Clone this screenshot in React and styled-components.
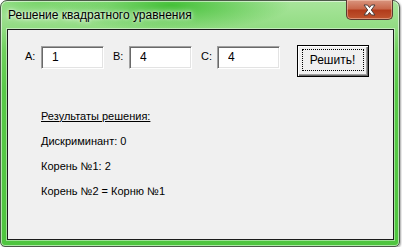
import React from 'react'
import styled, { createGlobalStyle } from 'styled-components'

const Global = createGlobalStyle`
  html, body {
    margin: 0;
    padding: 0;
    background: #ffffff;
  }
  * { box-sizing: border-box; }
`

const Window = styled.div`
  width: 400px;
  height: 247px;
  border: 1px solid #4b5a48;
  border-radius: 7px 7px 5px 5px;
  padding: 0 6px 6px 6px;
  display: flex;
  flex-direction: column;
  background:
    radial-gradient(ellipse 120px 26px at 170px 4px, rgba(52, 186, 40, 0.85), rgba(52, 186, 40, 0) 100%),
    radial-gradient(ellipse 70px 18px at 40px 0px, rgba(70, 195, 55, 0.5), rgba(70, 195, 55, 0) 100%),
    linear-gradient(to bottom, #a8e59b 0px, #93dc84 26px, #6fd05d 50px, #58c948 90px, #4fc53f 100%);
  box-shadow: inset 0 0 0 1px rgba(255, 255, 255, 0.55), 1px 1px 2px rgba(0, 0, 0, 0.35);
`

const TitleBar = styled.div`
  height: 28px;
  display: flex;
  justify-content: space-between;
  align-items: flex-start;
`

const Title = styled.span`
  margin-top: 7px;
  padding-left: 1px;
  font-family: "Liberation Sans", Arial, sans-serif;
  font-size: 12px;
  line-height: 15px;
  color: #000;
  text-shadow: 0 0 6px rgba(255, 255, 255, 0.9), 0 0 3px rgba(255, 255, 255, 0.9);
`

const CloseButton = styled.div`
  width: 47px;
  height: 20px;
  margin-top: -1px;
  border: 1px solid #5a3a30;
  border-top: none;
  border-radius: 0 0 5px 5px;
  display: flex;
  align-items: center;
  justify-content: center;
  background: linear-gradient(to bottom, #d9957f 0%, #c9694c 45%, #b23c1c 55%, #c0552f 100%);
  box-shadow: inset 0 0 0 1px rgba(255, 220, 200, 0.45);
`

const Client = styled.div`
  width: 387px;
  height: 212px;
  border: 1px solid #1b1b1b;
  background: #f0f0f0;
  padding: 16px 0 0 17px;
  box-shadow: 0 0 0 1px rgba(255, 255, 255, 0.45);
  font-family: "Liberation Sans", Arial, sans-serif;
  font-size: 11px;
  color: #000;
`

const TopRow = styled.div`
  display: flex;
  align-items: flex-start;
`

const Field = styled.div`
  display: flex;
  align-items: flex-start;
  margin-right: 9px;
`

const Label = styled.span`
  width: 16px;
  padding-top: 4px;
  line-height: 13px;
`

const Input = styled.input`
  width: 63px;
  height: 23px;
  margin: 0;
  padding: 0 0 0 10px;
  border: 1px solid;
  border-color: #a0a0a0 #ffffff #ffffff #a0a0a0;
  box-shadow: inset 1px 1px 0 #696969, inset -1px -1px 0 #e3e3e3;
  background: #ffffff;
  font-family: "Liberation Sans", Arial, sans-serif;
  font-size: 12px;
  color: #000;
  outline: none;
`

const Button = styled.button`
  margin: -1px 0 0 8px;
  width: 72px;
  height: 32px;
  padding: 0;
  border: 1px solid #000;
  background: #f0f0f0;
  box-shadow: inset 1px 1px 0 #ffffff, inset -1px -1px 0 #696969, inset -2px -2px 0 #a0a0a0;
  font-family: "Liberation Sans", Arial, sans-serif;
  font-size: 12px;
  color: #000;
  display: flex;
  align-items: center;
  justify-content: center;
`

const Focus = styled.span`
  width: 62px;
  height: 22px;
  border: 1px dotted #000;
  display: flex;
  align-items: center;
  justify-content: center;
  margin: -1px 0 0 -1px;
`

const Results = styled.div`
  margin: 32px 0 0 16px;
  display: flex;
  flex-direction: column;
`

const Line = styled.div`
  height: 25px;
  line-height: 15px;
  text-decoration: ${p => (p.$underline ? 'underline' : 'none')};
`

export default function App() {
  const fields = [
    { name: 'A:', value: '1' },
    { name: 'B:', value: '4' },
    { name: 'C:', value: '4' },
  ]

  return (
    <>
      <Global />
      <Window>
        <TitleBar>
          <Title>Решение квадратного уравнения</Title>
          <CloseButton>
            <svg width="15" height="12" viewBox="0 0 15 12">
              <path
                d="M2 1 L5.5 1 L7.5 3.6 L9.5 1 L13 1 L9.3 6 L13 11 L9.5 11 L7.5 8.4 L5.5 11 L2 11 L5.7 6 Z"
                fill="#ffffff"
                stroke="#4a3c3a"
                strokeWidth="1"
                strokeLinejoin="round"
              />
            </svg>
          </CloseButton>
        </TitleBar>
        <Client>
          <TopRow>
            {fields.map(f => (
              <Field key={f.name}>
                <Label>{f.name}</Label>
                <Input readOnly value={f.value} />
              </Field>
            ))}
            <Button>
              <Focus>Решить!</Focus>
            </Button>
          </TopRow>
          <Results>
            <Line $underline>Результаты решения:</Line>
            <Line>Дискриминант: 0</Line>
            <Line>Корень №1: 2</Line>
            <Line>Корень №2 = Корню №1</Line>
          </Results>
        </Client>
      </Window>
    </>
  )
}
